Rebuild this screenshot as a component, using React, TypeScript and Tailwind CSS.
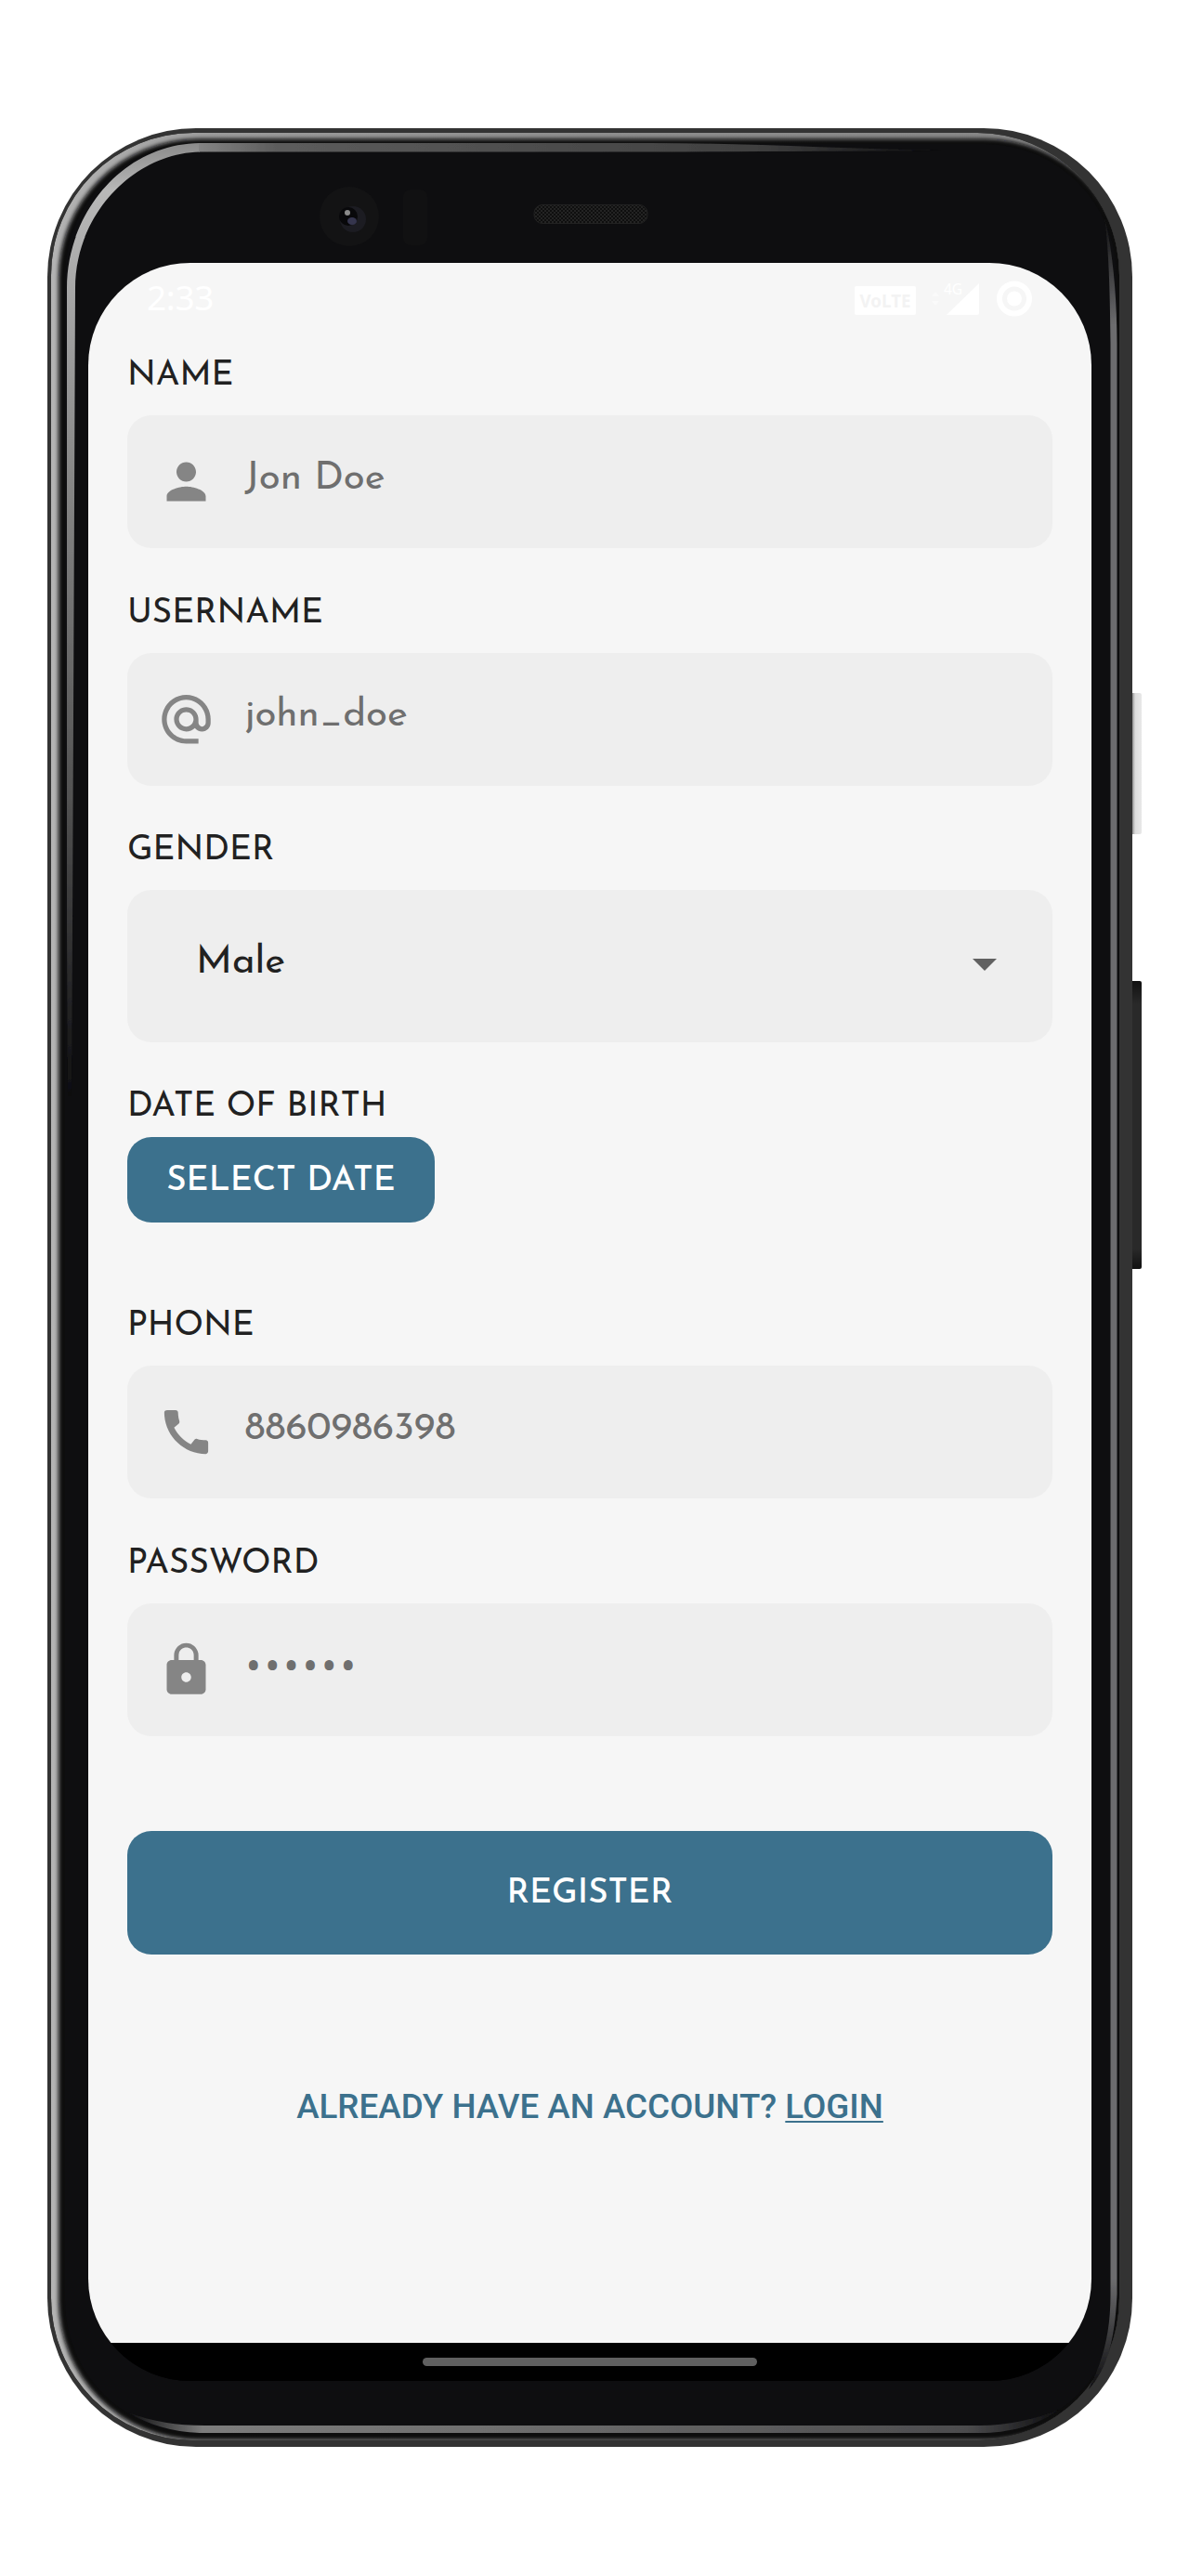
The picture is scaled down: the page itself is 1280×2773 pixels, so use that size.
import React from "react";
import type { ReactNode } from "react";

/* Device body: frame, metallic highlights, camera, speaker and side buttons. */
function DeviceBody() {
  return (
    <svg className="absolute inset-0" width="1280" height="2773" viewBox="0 0 1280 2773" fill="none" aria-hidden="true">
      <defs>
        <linearGradient id="rim" x1="51" x2="1219" y1="0" y2="0" gradientUnits="userSpaceOnUse">
          <stop offset="0" stopColor="#b4b4b4" />
          <stop offset="0.15" stopColor="#9c9c9c" />
          <stop offset="0.5" stopColor="#8e8e8e" />
          <stop offset="1" stopColor="#858585" />
        </linearGradient>
        <linearGradient id="leftGlow" x1="0" x2="0" y1="154" y2="1180" gradientUnits="userSpaceOnUse">
          <stop offset="0" stopColor="#8a8a8a" />
          <stop offset="0.05" stopColor="#b8b8b8" />
          <stop offset="0.3" stopColor="#8f8f8f" />
          <stop offset="0.7" stopColor="#505050" />
          <stop offset="1" stopColor="#0e0e10" />
        </linearGradient>
        <linearGradient id="topGlow" x1="200" x2="1015" y1="0" y2="0" gradientUnits="userSpaceOnUse">
          <stop offset="0" stopColor="#8a8a8a" />
          <stop offset="0.12" stopColor="#5c5c5c" />
          <stop offset="0.75" stopColor="#404040" />
          <stop offset="1" stopColor="#0e0e10" />
        </linearGradient>
        <linearGradient id="rightGlow" x1="0" x2="0" y1="233" y2="2570" gradientUnits="userSpaceOnUse">
          <stop offset="0" stopColor="#0e0e10" />
          <stop offset="0.05" stopColor="#6c6c6e" />
          <stop offset="0.95" stopColor="#6c6c6e" />
          <stop offset="1" stopColor="#0e0e10" />
        </linearGradient>
        <linearGradient id="bottomGlow" x1="138" x2="1140" y1="0" y2="0" gradientUnits="userSpaceOnUse">
          <stop offset="0" stopColor="#0e0e10" />
          <stop offset="0.08" stopColor="#7c7c7c" />
          <stop offset="0.4" stopColor="#6e6e6e" />
          <stop offset="0.9" stopColor="#4c4c4e" />
          <stop offset="1" stopColor="#0e0e10" />
        </linearGradient>
        <linearGradient id="powerKey" x1="1219" x2="1229" y1="0" y2="0" gradientUnits="userSpaceOnUse">
          <stop offset="0" stopColor="#8f8f8f" />
          <stop offset="0.3" stopColor="#dcdcdc" />
          <stop offset="1" stopColor="#e8e8e8" />
        </linearGradient>
        <linearGradient id="volumeKey" x1="0" x2="0" y1="1056" y2="1366" gradientUnits="userSpaceOnUse">
          <stop offset="0" stopColor="#111111" />
          <stop offset="0.08" stopColor="#292929" />
          <stop offset="0.93" stopColor="#292929" />
          <stop offset="1" stopColor="#111111" />
        </linearGradient>
        <pattern id="mesh" width="4" height="4" patternUnits="userSpaceOnUse">
          <rect width="4" height="4" fill="#0f0f0f" />
          <rect width="2" height="2" fill="#232323" />
          <rect x="2" y="2" width="2" height="2" fill="#232323" />
        </pattern>
        <filter id="soft" x="-5%" y="-5%" width="110%" height="110%">
          <feGaussianBlur stdDeviation="2" />
        </filter>
        <filter id="edge" x="-5%" y="-5%" width="110%" height="110%">
          <feGaussianBlur stdDeviation="0.7" />
        </filter>
        <clipPath id="inner">
          <rect x="55" y="143" width="1150" height="2484" rx="153" />
        </clipPath>
      </defs>
      <path d="M1219 746h8q2 0 2 2v148q0 2-2 2h-8z" fill="url(#powerKey)" />
      <path d="M1219 1056h8q2 0 2 2v306q0 2-2 2h-8z" fill="url(#volumeKey)" />
      <rect x="51" y="138" width="1168" height="2496" rx="160" fill="#333333" />
      <g clipPath="url(#inner)">
        <rect x="55" y="143" width="1150" height="2484" rx="153" fill="url(#rim)" />
        <rect x="63" y="149.500" width="1148" height="2477" rx="150" fill="#08080a" filter="url(#soft)" />
      </g>
      <rect x="70" y="155" width="1132" height="2464" rx="142" fill="#0e0e10" />
      <g filter="url(#edge)">
        <path d="M72 310C72 230 132 155 215 154L215 163.500C145 165 81 230 81 310L78 1000L77 1180H73L72 1000Z" fill="url(#leftGlow)" />
        <path d="M214 154H700C800 154 900 160 1015 162C900 163 800 163 700 163.500H214Z" fill="url(#topGlow)" />
        <path d="M1189 233C1198 270 1202.500 320 1202.500 370V2470C1200 2520 1192 2550 1172 2572C1188 2540 1195.500 2510 1195.500 2470V370C1195 320 1194 270 1189 233Z" fill="url(#rightGlow)" />
        <path d="M138 2597C165 2607 190 2611 220 2611H1055C1085 2611 1115 2604 1140 2594C1115 2612 1085 2619 1055 2619H215C185 2618 160 2610 138 2597Z" fill="url(#bottomGlow)" />
      </g>
      <circle cx="376" cy="233" r="32" fill="#131314" />
      <circle cx="380" cy="236" r="14" fill="#1c1c22" />
      <circle cx="375" cy="233" r="10" fill="#08080a" />
      <ellipse cx="379" cy="238" rx="5" ry="4" fill="#34344e" filter="url(#edge)" />
      <circle cx="374" cy="229" r="3" fill="#8a8a8a" filter="url(#edge)" />
      <rect x="434" y="204" width="26" height="60" rx="8" fill="#111112" />
      <rect x="575" y="220.500" width="122" height="20" rx="9" fill="url(#mesh)" stroke="#222222" />
    </svg>
  );
}

function StatusIcons() {
  return (
    <svg width="176" height="42" viewBox="918 301 176 42" className="overflow-visible" aria-hidden="true">
      <rect x="920" y="308" width="66" height="31" rx="2" fill="#fff" />
      <text x="925.500" y="330.500" fontFamily="Noto Sans" fontWeight="700" fontSize="19" textLength="55" lengthAdjust="spacingAndGlyphs" fill="#f3f3f3">VoLTE</text>
      <path d="M1003 319l4-5 4 5zM1003 324l4 5 4-5z" fill="#fafafa" />
      <path d="M1054 305v32q0 2-2 2h-33z" fill="#fff" />
      <text x="1016" y="317" fontFamily="Noto Sans" fontSize="15.500" fill="#fff" stroke="#f6f6f6" strokeWidth="2" paintOrder="stroke">4G</text>
      <circle cx="1092" cy="321.500" r="16" stroke="#fff" strokeWidth="6" fill="none" />
      <circle cx="1092" cy="321.500" r="8" fill="#fff" />
    </svg>
  );
}

function FieldIcon({ d }: { d: string }) {
  return (
    <svg className="ml-[31.500px] size-[63px] shrink-0" viewBox="0 0 24 24" fill="#858585" aria-hidden="true">
      <path d={d} />
    </svg>
  );
}

const icons = {
  person: "M12 12c2.210 0 4-1.790 4-4s-1.790-4-4-4-4 1.790-4 4 1.790 4 4 4zm0 2c-2.670 0-8 1.340-8 4v2h16v-2c0-2.660-5.330-4-8-4z",
  at: "M12 1.950c-5.520 0-10 4.480-10 10s4.480 10 10 10h5v-2h-5c-4.340 0-8-3.660-8-8s3.660-8 8-8 8 3.660 8 8v1.430c0 .79-.71 1.570-1.500 1.570s-1.500-.78-1.500-1.570v-1.430c0-2.760-2.240-5-5-5s-5 2.240-5 5 2.240 5 5 5c1.380 0 2.640-.56 3.540-1.470.65.89 1.770 1.470 2.960 1.470 1.970 0 3.500-1.600 3.500-3.570v-1.430c0-5.520-4.480-10-10-10zm0 13c-1.660 0-3-1.340-3-3s1.340-3 3-3 3 1.340 3 3-1.340 3-3 3z",
  phone: "M20.010 15.380c-1.230 0-2.420-.2-3.530-.56-.35-.12-.74-.03-1.010.24l-1.570 1.970c-2.830-1.350-5.480-3.900-6.890-6.830l1.950-1.660c.27-.28.35-.67.24-1.020-.37-1.110-.56-2.300-.56-3.530 0-.54-.45-.99-.99-.99H4.190C3.650 3 3 3.240 3 3.990 3 13.280 10.730 21 20.010 21c.71 0 .99-.63.99-1.180v-3.450c0-.54-.45-.99-.99-.99z",
  lock: "M18 8h-1V6c0-2.760-2.240-5-5-5S7 3.240 7 6v2H6c-1.100 0-2 .9-2 2v10c0 1.100.9 2 2 2h12c1.100 0 2-.9 2-2V10c0-1.100-.9-2-2-2zm-6 9c-1.100 0-2-.9-2-2s.9-2 2-2 2 .9 2 2-.9 2-2 2zm3.100-9H8.900V6c0-1.710 1.390-3.100 3.100-3.100 1.710 0 3.100 1.390 3.100 3.100v2z",
};

function Label({ className = "", children }: { className?: string; children: string }) {
  return <div className={`whitespace-nowrap text-[36.75px] leading-[55px] ${className}`}>{children}</div>;
}

function Field({ icon, children }: { icon: string; children: ReactNode }) {
  return (
    <div className="mt-[15px] flex h-[143px] items-center rounded-[26px] bg-[#eeeeee] text-[#6f6f6f]">
      <FieldIcon d={icon} />
      {children}
    </div>
  );
}

export default function App() {
  return (
    <div className="relative h-[2773px] w-[1280px] overflow-hidden bg-white pl-[95px] pt-[283px] font-['Josefin_Sans',Lato,sans-serif] text-[#212121]">
      <DeviceBody />
      <div className="relative flex h-[2280px] w-[1080px] flex-col overflow-hidden rounded-[110px] bg-black">
        <div className="flex grow flex-col bg-[#f6f6f6]">
          <div className="flex h-[94px] shrink-0 items-start justify-between pl-[63px] pr-[81px]">
            <div className="mt-[11px] font-['Noto_Sans',sans-serif] text-[37px] leading-[51px] tracking-[-0.3px] text-white">2:33</div>
            <div className="mt-[18px]"><StatusIcons /></div>
          </div>

          <div className="flex flex-col px-[42px]">
            <Label>NAME</Label>
            <Field icon={icons.person}>
              <span className="ml-8 pb-1.5 text-[42px] leading-[48px]">Jon Doe</span>
            </Field>

            <Label className="mt-[42.5px]">USERNAME</Label>
            <Field icon={icons.at}>
              <span className="ml-8 pb-1.5 text-[42px] leading-[48px]">john_doe</span>
            </Field>

            <Label className="mt-[42.5px]">GENDER</Label>
            <div className="mt-[15px] flex h-[164px] items-center justify-between rounded-[26px] bg-[#eeeeee] pl-[74px] pr-[60px]">
              <span className="pb-1.5 text-[42px] leading-[48px]">Male</span>
              <svg className="mb-1" width="26" height="13" viewBox="0 0 26 13" fill="#616161" aria-hidden="true"><path d="M0 0h26L13 13z" /></svg>
            </div>

            <Label className="mt-[42px]">DATE OF BIRTH</Label>
            <button className="mt-[5px] flex h-[92px] w-[331px] items-center justify-center rounded-[26px] bg-[#3c718d] pt-[3px] text-[36.75px] font-medium leading-[45px] text-white">SELECT DATE</button>

            <Label className="mt-[84px]">PHONE</Label>
            <Field icon={icons.phone}>
              <span className="ml-8 pb-1.5 text-[42px] leading-[48px]">8860986398</span>
            </Field>

            <Label className="mt-[42.5px]">PASSWORD</Label>
            <Field icon={icons.lock}>
              <span className="ml-[33px] pb-[10px] font-['Noto_Sans',sans-serif] text-[44px] leading-[60px] tracking-[3.85px]">••••••</span>
            </Field>

            <button className="mt-[102.5px] flex h-[133px] items-center justify-center rounded-[26px] bg-[#3c718d] pt-0.5 text-[36.75px] font-medium leading-[45px] text-white">REGISTER</button>

            <p className="mt-[143px] text-center font-[Roboto,sans-serif] text-[36.75px] font-medium leading-[41px] text-[#3c718d]">
              ALREADY HAVE AN ACCOUNT? <a className="underline decoration-2 underline-offset-[3px]">LOGIN</a>
            </p>
          </div>
        </div>

        <div className="flex h-[41px] shrink-0 items-start justify-center bg-black pt-4">
          <div className="h-[9px] w-[360px] rounded-full bg-[#606060]" />
        </div>
      </div>
    </div>
  );
}
